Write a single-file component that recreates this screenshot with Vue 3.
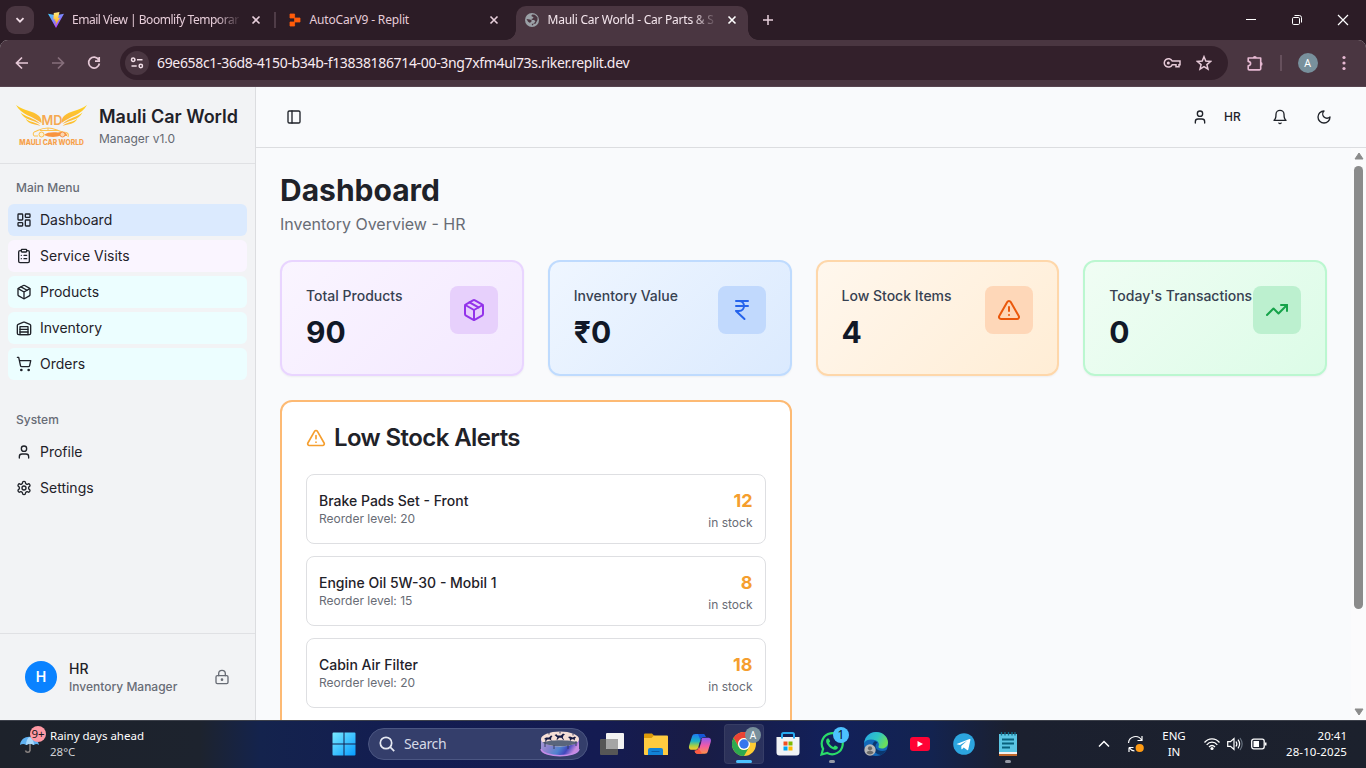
<script setup>
const icons = {
  dashboard: '<rect width="7" height="9" x="3" y="3" rx="1"/><rect width="7" height="5" x="14" y="3" rx="1"/><rect width="7" height="9" x="14" y="12" rx="1"/><rect width="7" height="5" x="3" y="16" rx="1"/>',
  clipboard: '<rect width="8" height="4" x="8" y="2" rx="1"/><path d="M16 4h2a2 2 0 0 1 2 2v14a2 2 0 0 1-2 2H6a2 2 0 0 1-2-2V6a2 2 0 0 1 2-2h2"/><path d="M12 11h4M12 16h4M8 11h.01M8 16h.01"/>',
  package: '<path d="m7.5 4.27 9 5.15"/><path d="M21 8a2 2 0 0 0-1-1.73l-7-4a2 2 0 0 0-2 0l-7 4A2 2 0 0 0 3 8v8a2 2 0 0 0 1 1.73l7 4a2 2 0 0 0 2 0l7-4A2 2 0 0 0 21 16Z"/><path d="m3.3 7 8.7 5 8.7-5M12 22V12"/>',
  warehouse: '<path d="M22 8.35V20a2 2 0 0 1-2 2H4a2 2 0 0 1-2-2V8.35A2 2 0 0 1 3.26 6.5l8-3.2a2 2 0 0 1 1.48 0l8 3.2A2 2 0 0 1 22 8.35Z"/><path d="M6 18h12M6 14h12"/><rect width="12" height="12" x="6" y="10"/>',
  cart: '<circle cx="8" cy="21" r="1"/><circle cx="19" cy="21" r="1"/><path d="M2.05 2.05h2l2.66 12.42a2 2 0 0 0 2 1.58h9.78a2 2 0 0 0 1.95-1.57l1.65-7.43H5.12"/>',
  user: '<path d="M19 21v-2a4 4 0 0 0-4-4H9a4 4 0 0 0-4 4v2"/><circle cx="12" cy="7" r="4"/>',
  settings: '<path d="M12.22 2h-.44a2 2 0 0 0-2 2v.18a2 2 0 0 1-1 1.73l-.43.25a2 2 0 0 1-2 0l-.15-.08a2 2 0 0 0-2.73.73l-.22.38a2 2 0 0 0 .73 2.73l.15.1a2 2 0 0 1 1 1.72v.51a2 2 0 0 1-1 1.74l-.15.09a2 2 0 0 0-.73 2.73l.22.38a2 2 0 0 0 2.73.73l.15-.08a2 2 0 0 1 2 0l.43.25a2 2 0 0 1 1 1.73V20a2 2 0 0 0 2 2h.44a2 2 0 0 0 2-2v-.18a2 2 0 0 1 1-1.73l.43-.25a2 2 0 0 1 2 0l.15.08a2 2 0 0 0 2.73-.73l.22-.39a2 2 0 0 0-.73-2.73l-.15-.08a2 2 0 0 1-1-1.74v-.5a2 2 0 0 1 1-1.74l.15-.09a2 2 0 0 0 .73-2.73l-.22-.38a2 2 0 0 0-2.73-.73l-.15.08a2 2 0 0 1-2 0l-.43-.25a2 2 0 0 1-1-1.73V4a2 2 0 0 0-2-2z"/><circle cx="12" cy="12" r="3"/>',
  lock: '<circle cx="12" cy="16" r="1"/><rect x="3" y="10" width="18" height="12" rx="2"/><path d="M7 10V7a5 5 0 0 1 10 0v3"/>',
  panel: '<rect width="18" height="18" x="3" y="3" rx="2"/><path d="M9 3v18"/>',
  bell: '<path d="M6 8a6 6 0 0 1 12 0c0 7 3 9 3 9H3s3-2 3-9"/><path d="M10.3 21a1.94 1.94 0 0 0 3.4 0"/>',
  moon: '<path d="M12 3a6 6 0 0 0 9 9 9 9 0 1 1-9-9Z"/>',
  rupee: '<path d="M6 3h12M6 8h12m-12 5 8.5 8M6 13h3M9 13c6.667 0 6.667-10 0-10"/>',
  alert: '<path d="m21.73 18-8-14a2 2 0 0 0-3.48 0l-8 14A2 2 0 0 0 4 21h16a2 2 0 0 0 1.73-3Z"/><path d="M12 9v4M12 17h.01"/>',
  trend: '<path d="M22 7 13.5 15.5 8.5 10.5 2 17"/><path d="M16 7h6v6"/>',
}

const mainMenu = [
  { label: 'Dashboard', icon: 'dashboard', tone: 'active' },
  { label: 'Service Visits', icon: 'clipboard', tone: 'violet' },
  { label: 'Products', icon: 'package', tone: 'cyan' },
  { label: 'Inventory', icon: 'warehouse', tone: 'cyan' },
  { label: 'Orders', icon: 'cart', tone: 'cyan' },
]
const systemMenu = [
  { label: 'Profile', icon: 'user' },
  { label: 'Settings', icon: 'settings' },
]
const stats = [
  { label: 'Total Products', value: '90', icon: 'package', tone: 'purple' },
  { label: 'Inventory Value', value: '₹0', icon: 'rupee', tone: 'blue' },
  { label: 'Low Stock Items', value: '4', icon: 'alert', tone: 'orange' },
  { label: "Today's Transactions", value: '0', icon: 'trend', tone: 'green' },
]
const alerts = [
  { name: 'Brake Pads Set - Front', level: 20, stock: 12 },
  { name: 'Engine Oil 5W-30 - Mobil 1', level: 15, stock: 8 },
  { name: 'Cabin Air Filter', level: 20, stock: 18 },
]
</script>

<template>
  <div class="screen">
    <header class="tabstrip">
      <div class="tab-search">
        <svg width="12" height="12" viewBox="0 0 12 12"><path d="M2.5 4.2 6 7.7l3.5-3.5" fill="none" stroke="#f0dce6" stroke-width="1.8" /></svg>
      </div>
      <div class="tab tab-one">
        <svg width="16" height="16" viewBox="0 0 16 16">
          <defs>
            <linearGradient id="vite" x1="0" y1="0" x2=".7" y2="1"><stop offset="0" stop-color="#41d1ff" /><stop offset="1" stop-color="#bd34fe" /></linearGradient>
            <linearGradient id="bolt" x1="0" y1="0" x2="0" y2="1"><stop offset="0" stop-color="#ffea83" /><stop offset="1" stop-color="#ffa800" /></linearGradient>
          </defs>
          <path d="M0 1.8 8 16l8-14.2-8 1.4z" fill="url(#vite)" />
          <path d="M11.5 0 5.8 1.1 5.4 7.6l1.8-.4-.5 2.4 1.5-.4-.9 4.2L12 5.700l-1.900.4z" fill="url(#bolt)" />
        </svg>
        <span class="tab-title first">Email View | Boomlify Temporar</span>
        <svg class="x" width="10" height="10" viewBox="0 0 10 10"><path d="m1.5 1.5 7 7m0-7-7 7" stroke="#e8cfdb" stroke-width="1.6" /></svg>
      </div>
      <i class="tab-sep"></i>
      <div class="tab tab-two">
        <svg width="12" height="14" viewBox="0 0 12 14"><path d="M1 1h4.6v4H1zM5.6 5H11v4H5.6zM1 9h4.6v4H1z" fill="#ff5c0a" stroke="#ff5c0a" stroke-width=".8" stroke-linejoin="round" /></svg>
        <span class="tab-title second">AutoCarV9 - Replit</span>
        <svg class="x" width="10" height="10" viewBox="0 0 10 10"><path d="m1.5 1.5 7 7m0-7-7 7" stroke="#e8cfdb" stroke-width="1.6" /></svg>
      </div>
      <div class="tab tab-three">
        <svg width="14" height="14" viewBox="0 0 14 14"><circle cx="7" cy="7" r="7" fill="#9aa0a6" /><path d="M7.2 1.5c-1.2 1-.8 2 .5 2.3C9 4 8.3 5.6 7 5.8c-1 .2-.5 1.2.6 1.2 1.8 0 3 .6 2.6 1.8-.3 1-1.500.8-1.700 2-.1.900-.700 1.700-1.500 1.700l-.2-1.800h3.700l2-3.700V4.200L9.800 1.800zM1.500 6l3.300.500c1.200.200 2 .800 1.800 1.700-.2.800-1.400.700-1.500 1.900l-2-1.300z" fill="#4a3641" /></svg>
        <span class="tab-title third">Mauli Car World - Car Parts &amp; S</span>
        <svg class="x" width="10" height="10" viewBox="0 0 10 10"><path d="m1.500 1.500 7 7m0-7-7 7" stroke="#fff" stroke-width="1.600" /></svg>
      </div>
      <svg class="plus" width="12" height="12" viewBox="0 0 12 12"><path d="M6 1v10M1 6h10" stroke="#e8cfdb" stroke-width="1.500" /></svg>
      <div class="window-buttons">
        <svg width="12" height="12" viewBox="0 0 12 12"><path d="M1 5.500h10" stroke="#fff" /></svg>
        <svg width="12" height="12" viewBox="0 0 12 12" fill="none" stroke="#fff"><rect x="1.500" y="3.500" width="7" height="7" rx="1.200" /><path d="M3.500 1.500h4.800a2.200 2.200 0 0 1 2.200 2.200v4.800" /></svg>
        <svg width="12" height="12" viewBox="0 0 12 12"><path d="m1 1 10 10M11 1 1 11" stroke="#fff" stroke-width="1.200" /></svg>
      </div>
    </header>

    <div class="toolbar">
      <div class="nav-buttons">
        <svg width="16" height="16" viewBox="0 0 16 16" fill="none" stroke="#e6c9d7" stroke-width="1.700"><path d="M14 8H2.800M8 2.500 2.500 8 8 13.500" /></svg>
        <svg width="16" height="16" viewBox="0 0 16 16" fill="none" stroke="#866f7b" stroke-width="1.700"><path d="M2 8h11.200M8 2.500 13.500 8 8 13.500" /></svg>
        <svg width="16" height="16" viewBox="0 0 16 16" fill="none" stroke="#e6c9d7" stroke-width="1.700"><path d="M12.700 4.800A5.400 5.400 0 1 0 13.400 8.500M13.200 2v4.100H9" /></svg>
      </div>
      <div class="omnibox">
        <div class="site-info">
          <svg width="14" height="14" viewBox="0 0 14 14" fill="none" stroke="#f2dfe8" stroke-width="1.500"><circle cx="3.200" cy="3.700" r="1.700" /><path d="M7 3.700h5.500M1.500 10h5.200" /><circle cx="10.800" cy="10" r="1.700" /></svg>
        </div>
        <span class="url">69e658c1-36d8-4150-b34b-f13838186714-00-3ng7xfm4ul73s.riker.replit.dev</span>
        <svg width="18" height="12" viewBox="0 0 18 12" fill="none" stroke="#e6c9d7" stroke-width="1.500"><path d="M9.200 4H17v3.800h-1v2h-3v-2H9.200A4.200 4.200 0 1 1 9.200 4z" /><circle cx="5.300" cy="6" r="1.500" fill="#e6c9d7" stroke="none" /></svg>
        <svg class="star" width="16" height="16" viewBox="0 0 16 16" fill="none" stroke="#e6c9d7" stroke-width="1.500"><path d="m8 1.700 1.800 4.400 4.700.4-3.600 3.100 1.100 4.600L8 11.700l-4 2.500 1.100-4.600L1.500 6.500l4.700-.4z" /></svg>
      </div>
      <svg class="puzzle" width="18" height="18" viewBox="0 0 18 18" fill="none" stroke="#e6b9d2" stroke-width="1.600" stroke-linejoin="round"><path d="M2.200 4h12.500v10.700a1.200 1.200 0 0 1-1.200 1.200H3.200a1 1 0 0 1-1-1v-3.100c3.200-.4 3.200-4 0-4.400z" /><path d="M6.800 4a2 2 0 0 1 4 0zM14.700 8a1.900 1.900 0 0 1 0 3.800z" fill="#e6b9d2" stroke="none" /></svg>
      <i class="tool-sep"></i>
      <span class="profile">A</span>
      <svg class="dots" width="4" height="16" viewBox="0 0 4 16" fill="#e6b9d2"><circle cx="2" cy="2.500" r="1.600" /><circle cx="2" cy="8" r="1.600" /><circle cx="2" cy="13.500" r="1.600" /></svg>
    </div>

    <div class="app">
      <aside class="sidebar">
        <div class="brand">
          <svg class="logo" width="72" height="46" viewBox="0 0 72 46">
            <defs><linearGradient id="gold" x1="0" y1="0" x2="0" y2="1"><stop offset="0" stop-color="#ffd21c" /><stop offset="1" stop-color="#fbb044" /></linearGradient></defs>
            <g fill="url(#gold)">
              <path d="M0 1c8 6 17 5.500 23 11 2 2 2.500 4 2.500 7C17 12 5 11 0 1z" />
              <path d="M4.500 8.500c5 4.500 13 5 20 11.500-8-4-16-4-20-11.500z" />
              <path d="M9.500 14.500c4 4 10 3 15 7.500-6-2-12-1.500-15-7.500z" />
            </g>
            <g transform="matrix(-1 0 0 1 71 0)" fill="url(#gold)">
              <path d="M0 1c8 6 17 5.500 23 11 2 2 2.500 4 2.500 7C17 12 5 11 0 1z" />
              <path d="M4.500 8.500c5 4.500 13 5 20 11.500-8-4-16-4-20-11.500z" />
              <path d="M9.500 14.500c4 4 10 3 15 7.500-6-2-12-1.500-15-7.500z" />
            </g>
            <text x="25.500" y="20.500" textLength="21" lengthAdjust="spacingAndGlyphs" class="logo-mark">MD</text>
            <path d="M18 28c4-1 6-4 14-4 7 0 9 3 15 4 5 0 6 2 5 5" fill="none" stroke="#fdc24c" stroke-width="1.200" />
            <path d="M18 28c-1 1-1 3 0 4h4M24 26.500h18M32 24v3" fill="none" stroke="#fdc24c" />
            <path d="M28 31c3-3 9-3 14-2.500l3-.5c4 0 6 1 6 4l-6-.5c-5 2-12 2-17-.5z" fill="#f8943f" />
            <circle cx="25.500" cy="30.500" r="2.500" fill="#fff1ce" stroke="#fcbf4b" /><circle cx="46.500" cy="30.500" r="2.500" fill="#fbd7ae" stroke="#f59049" />
            <text x="3.300" y="41" textLength="64.500" lengthAdjust="spacingAndGlyphs" class="logo-name">MAULI CAR WORLD</text>
          </svg>
          <div class="brand-text"><strong>Mauli Car World</strong><span>Manager v1.0</span></div>
        </div>
        <nav class="menu">
          <div class="group">
            <div class="group-label">Main Menu</div>
            <a v-for="m in mainMenu" :key="m.label" class="item" :class="m.tone">
              <svg class="lucide s16" viewBox="0 0 24 24" v-html="icons[m.icon]"></svg><span>{{ m.label }}</span>
            </a>
          </div>
          <div class="group">
            <div class="group-label">System</div>
            <a v-for="m in systemMenu" :key="m.label" class="item">
              <svg class="lucide s16" viewBox="0 0 24 24" v-html="icons[m.icon]"></svg><span>{{ m.label }}</span>
            </a>
          </div>
        </nav>
        <div class="account">
          <span class="avatar">H</span>
          <div class="account-text"><b>HR</b><span>Inventory Manager</span></div>
          <svg class="lucide s16 lock" viewBox="0 0 24 24" v-html="icons.lock"></svg>
        </div>
      </aside>

      <main class="main">
        <div class="topbar">
          <svg class="lucide s16" viewBox="0 0 24 24" v-html="icons.panel"></svg>
          <div class="topbar-right">
            <svg class="lucide s16" viewBox="0 0 24 24" v-html="icons.user"></svg>
            <span class="role">HR</span>
            <svg class="lucide s16 bell" viewBox="0 0 24 24" v-html="icons.bell"></svg>
            <svg class="lucide s16" viewBox="0 0 24 24" v-html="icons.moon"></svg>
          </div>
        </div>
        <div class="scroll">
          <div class="content">
            <h1>Dashboard</h1>
            <p class="subtitle">Inventory Overview - HR</p>
            <div class="grid">
              <section v-for="s in stats" :key="s.label" class="stat" :class="s.tone">
                <div class="stat-text"><div class="stat-label">{{ s.label }}</div><div class="stat-value">{{ s.value }}</div></div>
                <div class="stat-icon"><svg class="lucide s24" viewBox="0 0 24 24" v-html="icons[s.icon]"></svg></div>
              </section>
              <section class="alerts">
                <h2><svg class="lucide s20" viewBox="0 0 24 24" v-html="icons.alert"></svg>Low Stock Alerts</h2>
                <div v-for="a in alerts" :key="a.name" class="alert">
                  <div><div class="alert-name">{{ a.name }}</div><div class="small">Reorder level: {{ a.level }}</div></div>
                  <div class="right"><div class="count">{{ a.stock }}</div><div class="small">in stock</div></div>
                </div>
              </section>
            </div>
          </div>
          <div class="scrollbar">
            <svg width="10" height="8" viewBox="0 0 10 8"><path d="M5 1 9 7H1z" fill="#8b8b8b" stroke="#8b8b8b" stroke-linejoin="round" /></svg>
            <i class="thumb"></i>
            <svg class="down" width="10" height="8" viewBox="0 0 10 8"><path d="M5 7 9 1H1z" fill="#8b8b8b" stroke="#8b8b8b" stroke-linejoin="round" /></svg>
          </div>
        </div>
      </main>
    </div>

    <footer class="taskbar">
      <div class="weather">
        <svg width="28" height="30" viewBox="0 0 28 30">
          <path d="M11 14v10.500a2.300 2.300 0 0 1-4.500 0" fill="none" stroke="#8b8583" stroke-width="1.500" />
          <path d="M1 19C2 8 18 8 20 19c-1.500-1.500-4-1.500-5 0-1.500-1.500-6-1.500-8 0-1.500-1.500-4-1.500-6 0z" fill="#5fb2f2" />
          <path d="M7 19c0-4 1.500-7 3.500-8C13 12 15 15 15 19c-2-1.500-6-1.500-8 0z" fill="#a9d9fb" />
          <circle cx="19" cy="8" r="8" fill="#ff99a4" />
          <text x="19" y="12" text-anchor="middle" class="badge-nine">9+</text>
        </svg>
        <div class="weather-text"><span>Rainy days ahead</span><span class="dim">28°C</span></div>
      </div>
      <div class="apps">
        <div class="cell start">
          <svg width="24" height="24" viewBox="0 0 24 24"><defs><linearGradient id="win" x1="0" y1="0" x2="1" y2="1"><stop offset="0" stop-color="#79eaff" /><stop offset="1" stop-color="#069bff" /></linearGradient></defs><path d="M1.500.5H11.500V11.500H.5V1.500a1 1 0 0 1 1-1zM12.500.5h10a1 1 0 0 1 1 1v10h-11zM.5 12.500h11v11h-10a1 1 0 0 1-1-1zM12.500 12.500h11v10a1 1 0 0 1-1 1h-10z" fill="url(#win)" /></svg>
        </div>
        <div class="search">
          <svg width="16" height="16" viewBox="0 0 16 16" fill="none" stroke="#e6e9f2" stroke-width="1.700"><circle cx="7" cy="7" r="5.700" /><path d="m11.200 11.200 4 4" /></svg>
          <span>Search</span>
          <svg class="highlight" width="40" height="28" viewBox="0 0 40 28">
            <defs><linearGradient id="drum" x1="0" y1="0" x2="1" y2=".3"><stop offset="0" stop-color="#a9a1d8" /><stop offset=".3" stop-color="#8d83cf" /><stop offset=".6" stop-color="#4f83cf" /><stop offset=".8" stop-color="#4047bd" /><stop offset="1" stop-color="#c88be0" /></linearGradient></defs>
            <path d="M1 9v10c2 9 36 9 38 0V9z" fill="url(#drum)" />
            <path d="M1 19c2 9 36 9 38 0" fill="none" stroke="#c38be8" stroke-width="1.500" />
            <ellipse cx="20" cy="9" rx="19" ry="7.500" fill="#f6dfd6" />
            <path d="M2.500 12.500c7-3 28-3 35 0-8 5-27 5-35 0z" fill="#59657c" />
            <g fill="#151a42"><path d="M14.500 5l2-.8 1 1.300h3.500l2-2 2 1-1.500 1-.7 2 1.300 2.500-1-.2-1.700-2h-2.200l-1.800 2-1-.2 1-2z" /><path d="M4 9l2-1.500 3 0 2-2 1.500.6-1 1.200-.5 2 .8 1.800-2-1.500H7.500L5 12l.5-2.500zM28 7l2-.5 2.800 1 2.200-1 1 1.200-1.200.8v2l-1.600-1.200h-1.400L30 11l-.2-2.200z" /></g>
            <path d="M5 12v5M9 2.500v2M14 15v4M20 1.500v2M28 15v4M33 3.500v2M36 11v5" stroke="#363c62" />
          </svg>
        </div>
        <div class="cell">
          <svg width="24" height="24" viewBox="0 0 24 24"><rect y="7" width="18" height="16" rx="1" fill="#565656" /><rect x="6" y="1" width="18" height="16" rx="1" fill="#f2f2f2" /><path d="M6 7h12v10H7a1 1 0 0 1-1-1z" fill="#a5a5a5" /></svg>
        </div>
        <div class="cell">
          <svg width="24" height="24" viewBox="0 0 24 24"><path d="M0 2.500a1 1 0 0 1 1-1h7l3 3v3H0z" fill="#dd9a08" /><path d="M0 6h7.500L10 3.500h13a1 1 0 0 1 1 1V23H1a1 1 0 0 1-1-1z" fill="#ffcb40" /><path d="M4 23v-5a2 2 0 0 1 2-2h11a2 2 0 0 1 2 2v5z" fill="#1283d8" /><path d="M7.500 19.500h8" stroke="#0b5ca8" /></svg>
        </div>
        <div class="cell">
          <svg width="24" height="24" viewBox="0 0 24 24"><defs><linearGradient id="cpa" x1="0" y1="0" x2="0" y2="1"><stop offset="0" stop-color="#1f7cf2" /><stop offset=".45" stop-color="#19b3c8" /><stop offset=".75" stop-color="#a9cf42" /><stop offset="1" stop-color="#ffc72b" /></linearGradient><linearGradient id="cpb" x1="0" y1="0" x2="0" y2="1"><stop offset="0" stop-color="#8c5cf2" /><stop offset=".5" stop-color="#f05aa8" /><stop offset="1" stop-color="#ff9147" /></linearGradient></defs>
            <path d="M7.500 2h7c2 0 2.600 1 3.100 3h-2c-2 0-2.600 1-3.200 3l-2.200 7.500c-.5 1.700-1.300 2.300-3 2.300H4C.8 17.800.5 15.500 1.300 13L4 4.500C4.500 2.800 5.500 2 7.500 2z" fill="url(#cpa)" />
            <path d="M10 2h4.500c2 0 2.600 1 3.100 3h-2c-2 0-2.600 1-3.200 3z" fill="#1557d6" />
            <path d="M16.700 21.800h-7c-2 0-2.600-1-3.100-3 2 .2 3.300-.8 3.800-2.500L12.900 8c.5-1.700 1.300-2.300 3-2.300h4c3.200 0 3.500 2.300 2.700 4.800l-2.700 8.800c-.5 1.700-1.200 2.500-3.200 2.500z" fill="url(#cpb)" />
            <path d="M14.200 21.800H9.700c-2 0-2.600-1-3.100-3 2 .2 3.300-.8 3.800-2.500z" fill="#ff5a43" /><path d="m11 12.800 3-6.800-1 5-2 6z" fill="#171e50" />
          </svg>
        </div>
        <div class="cell current">
          <svg width="24" height="24" viewBox="0 0 24 24"><circle cx="12" cy="12" r="12" fill="#ffcd33" /><path d="M1.600 6A12 12 0 0 1 22.400 6H12a6 6 0 0 0-5.200 9z" fill="#ea4335" /><path d="M1.600 6A12 12 0 0 0 12 24l5.200-9A6 6 0 0 1 6.800 15z" fill="#2da94f" /><circle cx="12" cy="12" r="6" fill="#fff" /><circle cx="12" cy="12" r="4.700" fill="#3576ee" /></svg>
          <b class="badge grey">A</b><i class="run wide"></i>
        </div>
        <div class="cell">
          <svg width="24" height="24" viewBox="0 0 24 24"><path d="M6 7V2.500A1.500 1.500 0 0 1 7.500 1h9A1.500 1.500 0 0 1 18 2.500V7" fill="none" stroke="#27aaf0" stroke-width="2" /><path d="M.5 5h23v15.500a3 3 0 0 1-3 3h-17a3 3 0 0 1-3-3z" fill="#f1f3f5" /><path d="M6 5v1.500M18 5v1.500" stroke="#27aaf0" stroke-width="2" /><path d="M7.500 9.500h4v4h-4z" fill="#f25022" /><path d="M12.500 9.500h4v4h-4z" fill="#7fba00" /><path d="M7.500 14.500h4v4h-4z" fill="#00a4ef" /><path d="M12.500 14.500h4v4h-4z" fill="#ffb900" /></svg>
        </div>
        <div class="cell">
          <svg width="24" height="24" viewBox="0 0 24 24"><path d="m1.500 22.500 1.600-5.600A10.500 10.500 0 1 1 7.300 21z" fill="none" stroke="#2bdc69" stroke-width="2.200" /><path d="M8 6.200c-.5 0-1.900.9-1.900 2.800 0 3.700 5.600 9 9.200 8.700 1.400-.1 2.600-1.100 2.600-2.500 0-.6-2.300-1.800-2.900-1.800-.5 0-1.100 1.500-1.600 1.500-1.100 0-3.800-2.400-4.300-3.800-.2-.5 1-1.100 1-1.600 0-.7-1-3.300-2.100-3.300z" fill="#2bdc69" /></svg>
          <b class="badge cyan-badge">1</b><i class="run"></i>
        </div>
        <div class="cell">
          <svg width="24" height="24" viewBox="0 0 24 24"><defs><linearGradient id="edge" x1="0" y1="0" x2="1" y2=".4"><stop offset="0" stop-color="#27a5e8" /><stop offset=".6" stop-color="#2fc6c2" /><stop offset="1" stop-color="#6add5e" /></linearGradient></defs><circle cx="12" cy="12" r="12" fill="#1268b9" /><path d="M.2 11C1.200 4 6 0 12 0c7 0 12 5 12 10.500 0 3.500-2.500 6-6 6-2.500 0-4-.8-3.500-2 .8-1.600.8-4.500-2.500-6C8 6.700 2 7 .2 11z" fill="url(#edge)" /><path d="M11 9c-5 3-3 13 6 14 2-1 4.500-3 5.500-5-4 2-9 1-10.500-2-1-2-.5-4 1.500-5.500z" fill="#0b376f" /><circle cx="6" cy="18" r="5.700" fill="#b8b8b8" /><circle cx="6" cy="16.300" r="2.100" fill="#6a6a6a" /><path d="M2.500 21c.5-3 6.500-3 7 0A5 5 0 0 1 2.500 21z" fill="#6a6a6a" /></svg>
        </div>
        <div class="cell">
          <svg width="20" height="16" viewBox="0 0 20 16"><rect y="1" width="20" height="14" rx="3" fill="#ff0335" /><path d="m7.500 5 5.500 3-5.500 3z" fill="#fff" /></svg>
        </div>
        <div class="cell">
          <svg width="22" height="22" viewBox="0 0 21 21"><circle cx="10.500" cy="10.500" r="10.300" fill="#2ca5df" /><path d="m3.500 10.400 12.200-4.700c.6-.2 1.100.1.900.9l-2 9.200c-.2.700-.6.900-1.200.5l-3.200-2.400-1.500 1.500c-.4.300-.7.200-.7-.4l-.1-2.700 5.500-5-6.700 4.200-3-.8z" fill="#fff" /></svg>
        </div>
        <div class="cell">
          <svg width="20" height="24" viewBox="0 0 20 24"><rect x="1" y="2" width="18" height="20" fill="#5ac5e3" /><path d="M1 20h18v2H1z" fill="#f1f1f1" /><path d="M1 22h18v2H1z" fill="#c1692b" /><path d="M4 7.500h12M4 11.500h12M4 15.500h8" stroke="#08617d" stroke-width="1.800" /><path d="M3.500 0v3.500M7 0v3.500M10.500 0v3.500M14 0v3.500M17 0v3.500" stroke="#126d8a" stroke-width="1.300" /></svg>
          <i class="run"></i>
        </div>
      </div>
      <div class="tray">
        <svg class="caret" width="12" height="8" viewBox="0 0 12 8"><path d="m1 6.500 5-5 5 5" fill="none" stroke="#fff" stroke-width="1.500" /></svg>
        <svg class="update" width="18" height="18" viewBox="0 0 18 18" fill="none" stroke="#fff" stroke-width="1.200"><path d="M1.500 8A7 7 0 0 1 14.500 5M15 1v4.500h-4.500M2 12.500h4.500M2 12.500V17M2.300 12.800A8 8 0 0 0 7.500 16" /><circle cx="12.700" cy="13" r="4.100" fill="#ff9b13" stroke="none" /></svg>
        <div class="lang"><span>ENG</span><span>IN</span></div>
        <svg class="wifi" width="16" height="14" viewBox="0 0 16 14" fill="none" stroke="#fff" stroke-width="1.300"><path d="M.5 5.500C4.500.7 11.500.7 15.500 5.500M2.700 7.800c3-3.600 7.600-3.600 10.600 0M5 10c2-2 4-2 6 0" /><circle cx="8" cy="11.500" r="1.600" fill="#fff" stroke="none" /></svg>
        <svg class="sound" width="16" height="14" viewBox="0 0 16 14" fill="none" stroke="#fff" stroke-width="1.200"><path d="M.7 4.700h2.800L7 1.500v11L3.500 9.300H.7zM9 4.500q1.700 2.500 0 5M11 2.700q3.200 4.300 0 8.600" /><path d="M13 1q4.300 6 0 12" stroke="#66707d" /></svg>
        <svg width="16" height="12" viewBox="0 0 16 12"><rect x=".7" y="1.200" width="12.500" height="9.600" rx="2" fill="none" stroke="#fff" stroke-width="1.300" /><rect x="2.500" y="3" width="5.500" height="6" fill="#fff" /><path d="M14 4.500h1.500v3H14z" fill="#fff" /></svg>
        <div class="clock"><span>20:41</span><span class="date">28-10-2025</span></div>
      </div>
    </footer>
  </div>
</template>

<style>
body { overflow: hidden; }
</style>

<style scoped>
* { box-sizing: border-box; }
.screen { width: 1366px; height: 768px; display: flex; flex-direction: column; overflow: hidden; font-family: Inter, "Liberation Sans", sans-serif; color: #1f2229; }
svg { display: block; flex: none; }
.tabstrip, .toolbar, .taskbar { font-family: "Noto Sans", "Open Sans", sans-serif; }

.tabstrip { height: 40px; background: #2c1c26; display: flex; align-items: center; flex: none; padding-left: 6px; color: #e6ccd8; }
.tab-search { width: 28px; height: 28px; border-radius: 9px; background: #4a3641; display: grid; place-items: center; flex: none; }
.tab { display: flex; align-items: center; height: 34px; }
.tab-title { font-size: 12px; line-height: 18px; white-space: nowrap; flex: none; }
.tab-one { padding-left: 14px; width: 240px; }
.first { width: 168px; margin-left: 8px; letter-spacing: -.48px; }
.first, .third { -webkit-mask-image: linear-gradient(90deg, #000 86%, transparent 101%); mask-image: linear-gradient(90deg, #000 86%, transparent 101%); }
.tab-one .x { margin-left: 11px; }
.tab-sep { width: 1.5px; height: 16px; background: #4f3c47; }
.tab-two { padding-left: 13px; width: 240px; }
.second { width: 168px; margin-left: 9px; letter-spacing: -.15px; }
.tab-two .x { margin-left: 11px; }
.tab-three { position: relative; width: 232px; height: 34px; align-self: flex-end; background: #4a3641; border-radius: 10px 10px 0 0; padding: 0 0 6px 9px; color: #f5e7ee; }
.tab-three::before, .tab-three::after { content: ""; position: absolute; bottom: 0; width: 10px; height: 10px; }
.tab-three::before { left: -10px; background: radial-gradient(circle at 0 0, transparent 9.5px, #4a3641 10px); }
.tab-three::after { right: -10px; background: radial-gradient(circle at 100% 0, transparent 9.5px, #4a3641 10px); }
.third { width: 168px; margin-left: 9px; letter-spacing: -.24px; }
.tab-three .x { margin-left: 11px; }
.plus { margin-left: 14px; }
.window-buttons { margin-left: auto; display: flex; gap: 34px; padding-right: 17px; }

.toolbar { height: 47px; flex: none; background: #4a3641; box-shadow: inset 0 -1px #57444f; display: flex; align-items: center; border-radius: 8px 8px 0 0; outline: 8px solid #2c1c26; clip-path: inset(0); padding-bottom: 1px; }
.nav-buttons { display: flex; gap: 20px; padding-left: 14px; width: 120px; flex: none; }
.omnibox { width: 1108px; height: 34px; border-radius: 17px; background: #33202b; display: flex; align-items: center; padding: 0 16px 0 5px; flex: none; }
.site-info { width: 24px; height: 24px; border-radius: 50%; background: #4a3641; display: grid; place-items: center; }
.url { font-size: 14px; line-height: 18px; margin-left: 8px; letter-spacing: -.33px; color: #f8eaf1; white-space: nowrap; margin-right: auto; }
.star { margin-left: 15px; }
.puzzle { margin-left: 18px; }
.tool-sep { width: 1.5px; height: 16px; background: #66505c; margin-left: 16px; }
.profile { width: 20px; height: 20px; border-radius: 50%; background: #78909c; color: #fff; display: grid; place-items: center; font-size: 10.5px; margin-left: 16px; }
.dots { margin-left: 24px; }

.app { display: flex; height: 633px; flex: none; background: #f9fafc; }
.sidebar { width: 256px; flex: none; background: #f2f3f5; border-right: 1px solid #dcdde0; display: flex; flex-direction: column; }
.brand { height: 77px; border-bottom: 1px solid #e0e1e4; display: flex; padding: 16px 0 0 16px; flex: none; }
.logo { margin-top: 1px; overflow: visible; }
.logo-mark { font: 600 13px Inter, sans-serif; fill: #f5a850; }
.logo-name { font: 800 7.5px Inter, sans-serif; fill: #f7a14b; }
.brand-text { display: flex; flex-direction: column; margin-left: 11px; white-space: nowrap; }
.brand-text strong { font-size: 18px; line-height: 28px; font-weight: 600; }
.brand-text span { font-size: 12px; line-height: 16px; color: #646871; }
.menu { flex: 1; }
.group { padding: 8px 8px 0; height: 232px; display: flex; flex-direction: column; gap: 4px; }
.group-label { height: 32px; line-height: 32px; padding-left: 8px; font-size: 12px; font-weight: 500; color: #686c75; margin-bottom: -4px; }
.item { height: 32px; flex: none; display: flex; align-items: center; gap: 8px; padding-left: 8px; border-radius: 6px; font-size: 14px; line-height: 20px; }
.item.active { background: #dbeafe; }
.item.violet { background: #faf5ff; }
.item.cyan { background: #ecfeff; }
.lucide { fill: none; stroke: currentColor; stroke-width: 2; stroke-linecap: round; stroke-linejoin: round; }
.s16 { width: 16px; height: 16px; }
.s20 { width: 20px; height: 20px; }
.s24 { width: 24px; height: 24px; }
.account { height: 87px; border-top: 1px solid #e0e1e4; display: flex; align-items: center; padding: 0 25px; flex: none; }
.avatar { width: 32px; height: 32px; border-radius: 50%; background: #0a82ff; color: #fff; font-size: 14px; line-height: 20px; font-weight: 600; display: grid; place-items: center; }
.account-text { display: flex; flex-direction: column; margin-left: 12px; }
.account-text b { font-size: 14px; font-weight: 500; line-height: 20px; }
.account-text span { font-size: 12px; font-weight: 500; line-height: 16px; color: #686c75; }
.lock { margin-left: auto; color: #686c75; }

.main { flex: 1; display: flex; flex-direction: column; min-width: 0; }
.topbar { height: 61px; border-bottom: 1px solid #dcdde0; display: flex; align-items: center; padding: 0 34px 0 30px; flex: none; }
.topbar-right { margin-left: auto; display: flex; align-items: center; }
.role { font-size: 12px; line-height: 16px; font-weight: 500; margin-left: 16px; width: 18px; }
.bell { margin: 0 28px 0 30px; }
.scroll { flex: 1; display: flex; min-height: 0; overflow: hidden; }
.content { width: 1095px; padding: 24px; flex: none; }
h1 { margin: 0; font-size: 30px; line-height: 36px; font-weight: 700; }
.subtitle { margin: 4px 0 24px; font-size: 16px; line-height: 24px; color: #686c75; }
.grid { display: grid; grid-template-columns: repeat(4, 1fr); gap: 24px; }
.stat { height: 116px; border: 2px solid; border-radius: 12px; padding: 24px; display: flex; justify-content: space-between; box-shadow: 0 1px 2px rgba(0, 0, 0, .05); min-width: 0; }
.stat-text { min-width: 0; flex: 0 1 auto; }
.stat-label { font-size: 14px; line-height: 20px; font-weight: 500; color: #374151; white-space: nowrap; }
.stat-value { margin-top: 8px; font-size: 30px; line-height: 36px; font-weight: 700; color: #111827; }
.stat-icon { width: 48px; height: 48px; border-radius: 8px; display: grid; place-items: center; flex: none; }
.purple { background: linear-gradient(135deg, #faf5ff, #f3e8ff); border-color: #e9d5ff; }
.purple .stat-icon { background: #e7d0fc; color: #9333ea; }
.blue { background: linear-gradient(135deg, #eff6ff, #dbeafe); border-color: #bfdbfe; }
.blue .stat-icon { background: #c1d9fd; color: #2563eb; }
.orange { background: linear-gradient(135deg, #fff7ed, #ffedd5); border-color: #fed7aa; }
.orange .stat-icon { background: #fed7b8; color: #ea580c; }
.green { background: linear-gradient(135deg, #f0fdf4, #dcfce7); border-color: #bbf7d0; }
.green .stat-icon { background: #bcf0cf; color: #16a34a; }
.alerts { grid-column: span 2; border: 2px solid #fdba74; border-radius: 12px; background: #fff; padding: 24px; height: 480px; display: flex; flex-direction: column; gap: 12px; }
h2 { margin: 0 0 12px; height: 24px; display: flex; align-items: center; gap: 8px; font-size: 24px; line-height: 24px; font-weight: 600; letter-spacing: -.6px; }
h2 .lucide { color: #f59e2e; }
.alert { height: 70px; flex: none; border: 1px solid #dedfe2; border-radius: 8px; padding: 0 12px; display: flex; align-items: center; justify-content: space-between; }
.alert-name { font-size: 14px; font-weight: 500; line-height: 20px; }
.small { font-size: 12px; line-height: 16px; color: #686c75; }
.right { text-align: right; }
.count { font-size: 18px; line-height: 28px; font-weight: 700; color: #f59e2e; }
.scrollbar { width: 15px; background: #fbfbfc; display: flex; flex-direction: column; align-items: center; padding-top: 4px; }
.thumb { width: 9px; height: 443px; border-radius: 5px; background: #8b8b8b; margin-top: 6px; }
.down { margin: auto 0 4px; }

.taskbar { height: 48px; flex: none; display: flex; align-items: center; box-shadow: inset 0 1px #3d414b; color: #fff; background: linear-gradient(90deg, #1d222b 0, #1d232e 200px, #14234d 260px, #131d51 400px, #141b52 600px, #191c45 700px, #12205a 830px, #132350 930px, #1b202f 1010px, #1c212d 1366px); font-size: 12px; }
.weather { width: 322px; display: flex; align-items: center; padding-left: 19px; flex: none; }
.weather svg { margin-top: -7px; }
.weather-text { display: flex; flex-direction: column; margin-left: 3px; line-height: 16px; font-size: 11.5px; }
.weather-text, .lang, .clock { padding-bottom: 1px; }
.dim { color: #d0d3d8; letter-spacing: 0; }
.badge-nine { font: 11.5px "Noto Sans", sans-serif; fill: #17181c; }
.apps { display: flex; align-items: center; }
.cell { width: 44px; height: 48px; display: grid; place-items: center; position: relative; flex: none; }
.start { padding-right: 1px; }
.search { width: 220px; height: 32px; border-radius: 16px; background: #343e6b; border: 1px solid #4b5682; margin: 0 2px; display: flex; align-items: center; padding: 0 7px 0 10px; font-size: 14px; line-height: 18px; color: #d6d9e6; }
.search span { margin-left: 9px; letter-spacing: -.35px; }
.highlight { margin-left: auto; }
.current::before { content: ""; position: absolute; inset: 4px 2px; border-radius: 4px; background: rgba(255, 255, 255, .09); box-shadow: inset 0 0 0 1px rgba(255, 255, 255, .06); }
.current svg { position: relative; }
.badge { position: absolute; width: 16px; height: 16px; left: 23px; top: 7px; border-radius: 50%; display: grid; place-items: center; font-size: 10px; line-height: 14px; font-weight: 400; }
.grey { background: #78909c; }
.cyan-badge { background: #4cc2ff; color: #10131a; font-size: 12px; }
.run { position: absolute; bottom: 5px; left: 19px; width: 6px; height: 3px; border-radius: 2px; background: #9599a5; }
.run.wide { width: 16px; left: 14px; background: #4cc2ff; }
.tray { margin-left: auto; display: flex; align-items: center; padding-right: 19px; }
.update { margin-left: 17px; }
.lang { display: flex; flex-direction: column; align-items: center; line-height: 16px; width: 28px; margin-left: 15px; font-size: 11.5px; }
.wifi { margin-left: 16px; }
.sound { margin: 0 8px 0 7px; }
.clock { display: flex; flex-direction: column; align-items: flex-end; line-height: 16px; width: 80px; font-size: 11.5px; }
.date { letter-spacing: .1px; }
</style>
